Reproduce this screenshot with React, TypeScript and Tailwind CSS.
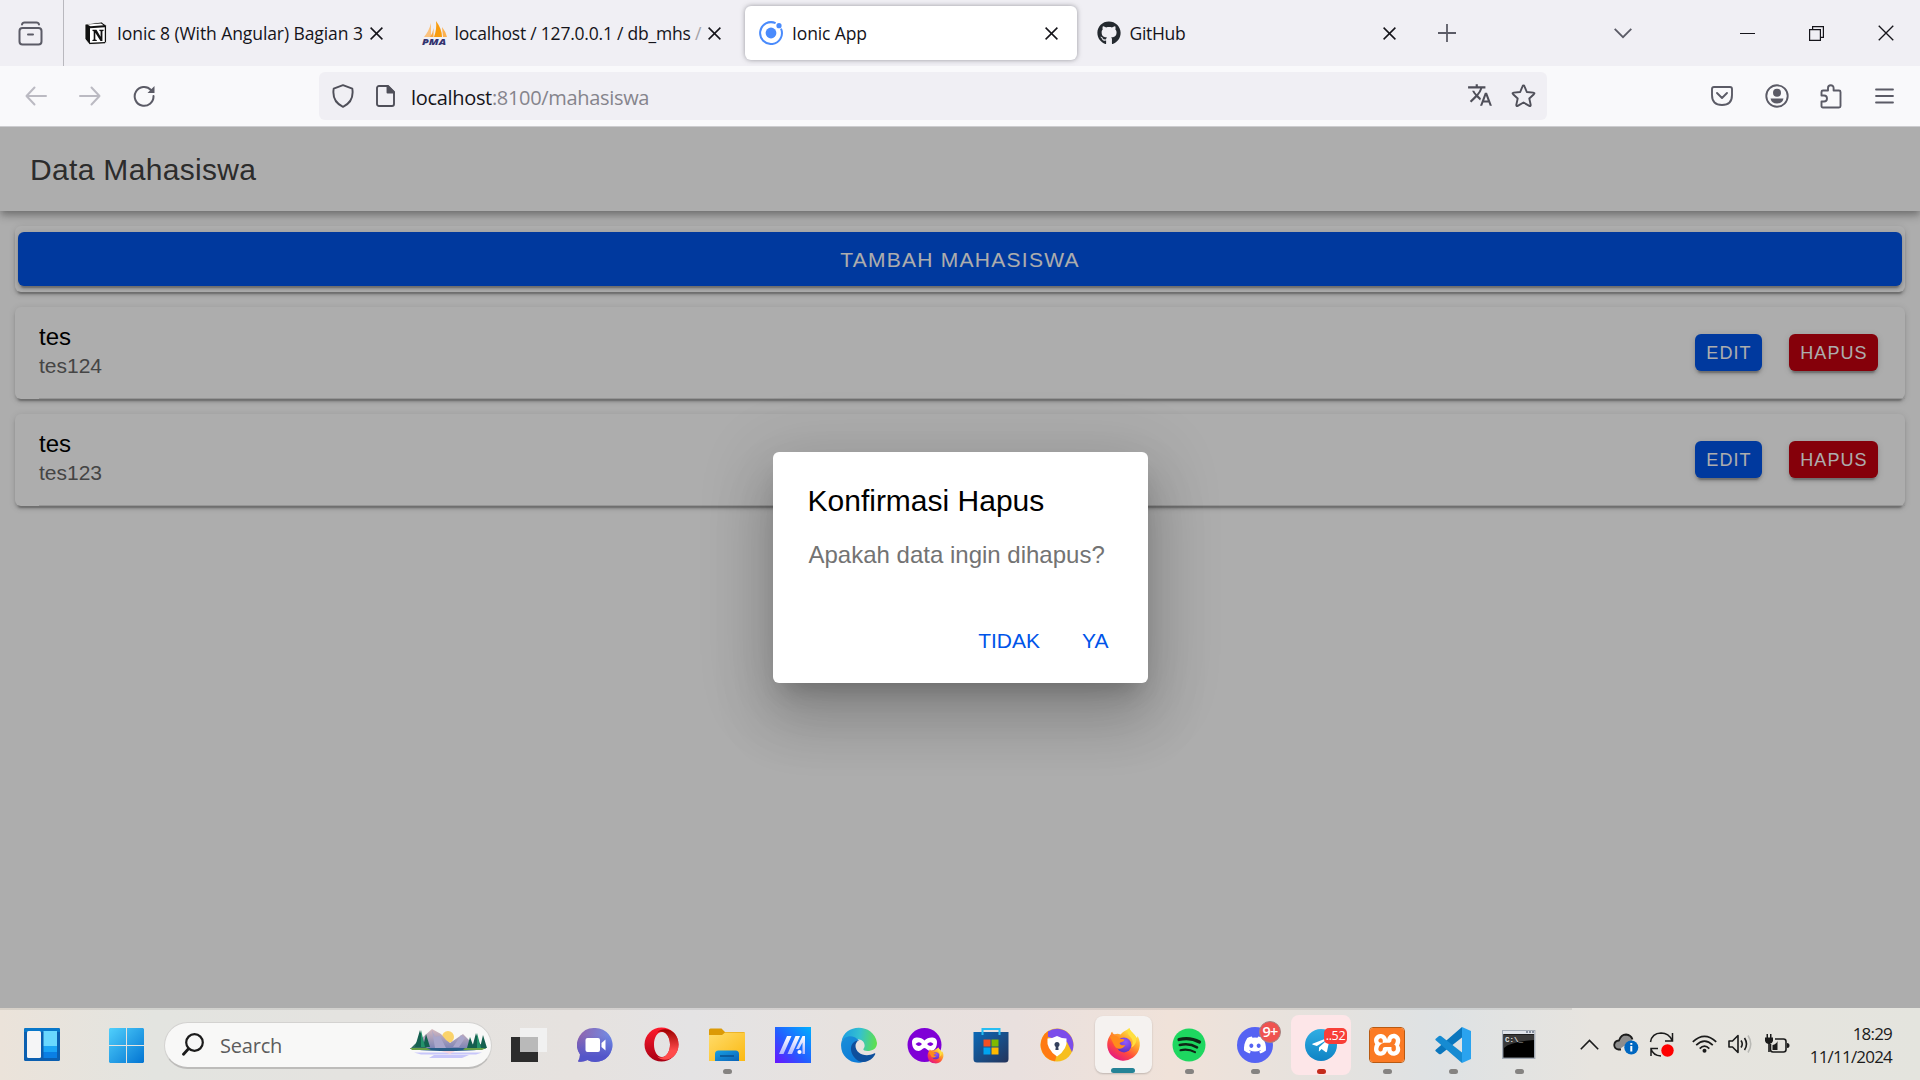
import type { ReactNode } from "react";
import { FaDiscord, FaGithub, FaTelegramPlane } from "react-icons/fa";
import { SiXampp } from "react-icons/si";
import { MdTranslate } from "react-icons/md";

function Cross({ size = 13, width = 1.5 }: { size?: number; width?: number }) {
  return (
    <svg width={size} height={size} viewBox="0 0 13 13" stroke="#15141a" strokeWidth={width} fill="none">
      <path d="M.6.6 12.4 12.4M12.4.6.6 12.4" />
    </svg>
  );
}

function Tab({ icon, active, children }: { icon: ReactNode; active?: boolean; children: ReactNode }) {
  return (
    <div
      className={
        active
          ? "flex h-[54px] w-[332px] items-center rounded-md bg-white pl-[14px] pr-5 shadow-[0_0_5px_rgba(80,80,90,0.55)]"
          : "flex h-[54px] w-[332px] items-center pl-[14px] pr-5"
      }
    >
      <div className="flex w-[33px] shrink-0 items-center">{icon}</div>
      <div className="w-[253px] shrink-0 whitespace-nowrap text-[17.5px] text-[#15141a]">{children}</div>
      <div className="flex w-[13px] shrink-0 justify-center">
        <Cross />
      </div>
    </div>
  );
}

function Slot({ children, w = "w-[54px]" }: { children: ReactNode; w?: string }) {
  return <div className={`flex shrink-0 items-center justify-center ${w}`}>{children}</div>;
}

const NotionIcon = () => (
  <svg width="24" height="24" viewBox="0 0 24 24">
    <path d="M1 3.2 17.5 1 22.5 4.500v16.500L20.500 22.800 5.500 23.600 1 18z" fill="#111" stroke="#fff" strokeWidth="0.8" />
    <path d="M3.200 3.600 17 2.400l2.600 1.900L6.500 5.200z" fill="#fff" />
    <path d="M6 7.200 20.800 6.300v14.600l-14.800.9z" fill="#fff" />
    <path d="M8.500 8.800h4l4.100 7V10.200l-1.300-.4V8.700h4.300v1.100l-1.200.5v9.600h-1.900l-5.200-8.200v6.800l1.500.5v1H8.400v-.9l1.300-.5V10.200l-1.200-.3z" fill="#111" />
  </svg>
);

const PmaIcon = () => (
  <svg width="26" height="25" viewBox="0 0 26 25" overflow="visible">
    <path d="M9 2v14H2Q7 10 9 2z" fill="#fbc27d" />
    <path d="M14 0Q20 8 20 16H12Q15 8 14 0z" fill="#f89c0e" />
    <path d="M11.500 7v9H8Q11 12 11.500 7z" fill="#f9a743" />
    <path d="M20 6Q24 11 25 16h-4z" fill="#fbb04f" />
    <text x="0" y="24" fontFamily="Open Sans, sans-serif" fontSize="9.500" fontWeight="800" fontStyle="italic" fill="#33336f" textLength="24" lengthAdjust="spacingAndGlyphs">
      PMA
    </text>
  </svg>
);

const IonicIcon = () => (
  <svg width="24" height="24" viewBox="0 0 24 24" fill="#4a8bfc">
    <circle cx="12" cy="12" r="5.4" />
    <circle cx="20" cy="4.700" r="2.600" />
    <path d="M16.600 2.200A10.900 10.900 0 1 0 22 7.700" fill="none" stroke="#4a8bfc" strokeWidth="2" />
  </svg>
);

function BrowserTabs() {
  return (
    <div className="flex h-[66px] items-center bg-[#f0eff4]">
      <div className="flex h-full w-16 shrink-0 items-center justify-center border-r border-[#b9b8be] pr-[3px]">
        <svg width="25" height="25" viewBox="0 0 25 25" fill="none" stroke="#5b5b66" strokeWidth="2" strokeLinecap="round">
          <path d="M4 3.500Q4.500 1.500 6.500 1.500h12Q20.500 1.500 21 3.500M10 13.500h5" />
          <rect x="1.500" y="7" width="22" height="16.500" rx="3" />
        </svg>
      </div>
      <div className="ml-[6px] flex shrink-0 gap-[5.5px]">
        <Tab icon={<NotionIcon />}>
          <span className="tracking-[-0.08px]">Ionic 8 (With Angular) Bagian 3</span>
        </Tab>
        <Tab icon={<PmaIcon />}>
          <span className="tracking-[-0.21px]">
            localhost / 127.0.0.1 / db_mhs <span className="text-[#a3a2a8]">/</span>
          </span>
        </Tab>
        <Tab active icon={<IonicIcon />}>
          <span className="tracking-[-0.12px]">Ionic App</span>
        </Tab>
        <Tab icon={<FaGithub size={24} color="#24292f" />}>
          <span className="tracking-[-0.3px]">GitHub</span>
        </Tab>
      </div>
      <div className="ml-[5px] flex">
        <Slot>
          <svg width="18" height="18" viewBox="0 0 18 18" stroke="#5b5b66" strokeWidth="1.800">
            <path d="M9 0v18M0 9h18" />
          </svg>
        </Slot>
      </div>
      <div className="ml-[122px] flex">
        <Slot>
          <svg width="18" height="11" viewBox="0 0 18 11" fill="none" stroke="#5b5b66" strokeWidth="1.800">
            <path d="m.7.8 8.300 8.400L17.300.8" />
          </svg>
        </Slot>
      </div>
      <div className="ml-auto flex">
        <Slot w="w-[69px]">
          <div className="h-px w-[15px] bg-[#15141a]" />
        </Slot>
        <Slot w="w-[69px]">
          <svg width="15" height="15" viewBox="0 0 15 15" fill="none" stroke="#15141a" strokeWidth="1.200">
            <path d="M.6 3.600h10.800v10.800H.6zM3.600 3.500V.6h10.800v10.800h-2.900" />
          </svg>
        </Slot>
        <Slot w="w-[69px]">
          <Cross size={16} width={1.1} />
        </Slot>
      </div>
    </div>
  );
}

function NavBar() {
  return (
    <div className="flex h-[61px] items-center border-b border-[#cccccf] bg-[#f9f9fb] pl-[9px] pr-[9px]">
      <Slot>
        <svg width="22" height="20" viewBox="0 0 22 20" fill="none" stroke="#bbbac2" strokeWidth="2" strokeLinecap="round" strokeLinejoin="round">
          <path d="M21 10H1.500M9.500 1.500 1.500 10l8 8.500" />
        </svg>
      </Slot>
      <Slot>
        <svg width="22" height="20" viewBox="0 0 22 20" fill="none" stroke="#bbbac2" strokeWidth="2" strokeLinecap="round" strokeLinejoin="round">
          <path d="M1 10h19.500M12.500 1.500l8 8.500-8 8.500" />
        </svg>
      </Slot>
      <Slot>
        <svg width="22" height="22" viewBox="0 0 22 22" fill="none" stroke="#5b5b66" strokeWidth="2" strokeLinecap="round">
          <path d="M18 5A9.400 9.400 0 1 0 20.500 11" />
          <path d="M21.500 1v7h-7z" fill="#5b5b66" stroke="none" />
        </svg>
      </Slot>
      <div className="ml-[148px] flex h-12 w-[1228px] shrink-0 items-center rounded-md bg-[#f0eff4] pl-[3px] pr-[3px]">
        <Slot w="w-[42px]">
          <svg width="22" height="24" viewBox="0 0 22 24" fill="none" stroke="#4f4f59" strokeWidth="1.900" strokeLinejoin="round">
            <path d="M11 1.200 20.300 4.600C21.800 14 17 20 11 22.800 5 20 .2 14 1.700 4.600z" />
          </svg>
        </Slot>
        <Slot w="w-[42px]">
          <svg width="19" height="22" viewBox="0 0 19 22" fill="none" stroke="#4f4f59" strokeWidth="1.900" strokeLinejoin="round">
            <path d="M3 1h9l6 6v12a2 2 0 0 1-2 2H3a2 2 0 0 1-2-2V3a2 2 0 0 1 2-2z" />
            <path d="M11.500 1v6.500H18z" fill="#4f4f59" />
          </svg>
        </Slot>
        <div className="ml-[5px] flex-1 whitespace-nowrap pt-[3px] text-[20px] tracking-[-0.32px] text-[#15141a]">
          localhost<span className="text-[#85848c]">:8100/mahasiswa</span>
        </div>
        <Slot w="w-[42px]">
          <MdTranslate size={26} color="#4f4f59" className="mr-[2px] mt-[-2px]" />
        </Slot>
        <Slot w="w-[42px]">
          <svg width="25" height="24" viewBox="0 0 25 24" fill="none" stroke="#4f4f59" strokeWidth="1.900" strokeLinejoin="round">
            <path d="M12.500 1.500q.7 0 1 .8l2.300 5.700 6.500.6q1.900.3.6 1.600l-4.600 4.300 1.400 6.400q.1 1.700-1.400 1l-5.800-3.400-5.800 3.400q-1.500.7-1.400-1l1.400-6.400L2.100 10.200Q.8 8.900 2.700 8.600L9.200 8l2.300-5.700q.3-.8 1-.8z" />
          </svg>
        </Slot>
      </div>
      <div className="ml-auto flex">
        <Slot>
          <svg width="22" height="20" viewBox="0 0 22 20" fill="none" stroke="#5b5b66" strokeWidth="1.900" strokeLinecap="round" strokeLinejoin="round">
            <path d="M3 1h16q2 0 2 2v6q0 10-10 10T1 9V3q0-2 2-2zM6 7l5 5 5-5" />
          </svg>
        </Slot>
        <Slot>
          <svg className="ml-px" width="24" height="24" viewBox="0 0 24 24" fill="#5b5b66">
            <circle cx="12" cy="12" r="10.700" fill="none" stroke="#5b5b66" strokeWidth="1.900" />
            <circle cx="12" cy="8.800" r="4" />
            <path d="M5.500 14.500h13q-1 5-6.500 5t-6.500-5z" />
          </svg>
        </Slot>
        <Slot>
          <svg className="ml-px" width="22" height="25" viewBox="0 0 22 25" fill="none" stroke="#5b5b66" strokeWidth="1.900" strokeLinejoin="round">
            <path d="M1.500 9V8Q1.500 6.500 3 6.500H8V4a2.800 2.800 0 0 1 5.600 0v2.500H19q1.500 0 1.500 1.500v14q0 1.500-1.500 1.500H3q-1.500 0-1.500-1.500v-4.500H4a3 3 0 0 0 0-6H1.500z" />
          </svg>
        </Slot>
        <Slot>
          <svg width="19" height="16" viewBox="0 0 19 16" stroke="#5b5b66" strokeWidth="1.800" strokeLinecap="round">
            <path d="M1 1.500h17M1 8h17M1 14.500h17" />
          </svg>
        </Slot>
      </div>
    </div>
  );
}

const cardShadow =
  "shadow-[0_4.5px_1.5px_-3px_rgba(0,0,0,0.2),0_3px_3px_0_rgba(0,0,0,0.14),0_1.5px_7.5px_0_rgba(0,0,0,0.12)]";

function StudentCard({ name, nim }: { name: string; nim: string }) {
  return (
    <div className={`flex h-[92px] items-stretch rounded-md bg-white pl-6 ${cardShadow}`}>
      <div className="flex flex-1 items-center border-b border-[#dcdcdc] pr-[27px]">
        <div className="flex-1 pb-[3px]">
          <div className="text-[24px] leading-[30px] text-black">{name}</div>
          <div className="text-[21px] leading-[28px] text-[#666]">{nim}</div>
        </div>
        <button className={`mr-[27px] h-[37px] w-[67px] rounded-md bg-[#0054e9] pl-px pt-px text-center text-[18px] tracking-[1.08px] text-white ${cardShadow}`}>
          EDIT
        </button>
        <button className={`h-[37px] w-[89px] rounded-md bg-[#c5000f] pl-px pt-px text-center text-[18px] tracking-[1.08px] text-white ${cardShadow}`}>
          HAPUS
        </button>
      </div>
    </div>
  );
}

function AppPage() {
  return (
    <main className='relative h-[881px] overflow-hidden bg-white font-["Liberation_Sans",sans-serif]'>
      <header className="relative flex h-[84px] items-center bg-white pl-[30px] text-[30px] tracking-[0.33px] text-[#424242] shadow-[0_3px_6px_-1.5px_rgba(0,0,0,0.2),0_6px_7.5px_0_rgba(0,0,0,0.14),0_1.5px_15px_0_rgba(0,0,0,0.12)]">
        Data Mahasiswa
      </header>
      <div className="flex flex-col gap-[15px] px-[15px] pt-[15px]">
        <div className={`rounded-md px-[3px] py-[6px] ${cardShadow}`}>
          <button className={`block h-[54px] w-full rounded-md bg-[#0054e9] pt-px text-[21px] tracking-[1.26px] text-white ${cardShadow}`}>
            TAMBAH MAHASISWA
          </button>
        </div>
        <StudentCard name="tes" nim="tes124" />
        <StudentCard name="tes" nim="tes123" />
      </div>
      <div className="absolute inset-0 flex items-center justify-center bg-black/32">
        <div className="h-[231px] w-[375px] rounded-md bg-white pl-[35px] pr-[18px] pt-[30px] shadow-[0_16.5px_22.5px_-10.5px_rgba(0,0,0,0.2),0_36px_57px_4.5px_rgba(0,0,0,0.14),0_13.5px_69px_12px_rgba(0,0,0,0.12)]">
          <h2 className="text-[30px] leading-[38px] text-black">Konfirmasi Hapus</h2>
          <p className="ml-px mt-4 text-[24px] leading-[38px] text-[#737373]">Apakah data ingin dihapus?</p>
          <div className="mt-10 flex justify-end text-[21px] leading-[54px] text-[#0054e9]">
            <span className="mr-[42px]">TIDAK</span>
            <span className="mr-[21px]">YA</span>
          </div>
        </div>
      </div>
    </main>
  );
}

const FirefoxArt = ({ size }: { size: number }) => (
  <svg width={size} height={size} viewBox="0 0 36 36">
    <defs>
      <linearGradient id="fxBody" x1="0.85" y1="0.1" x2="0.25" y2="1">
        <stop offset="0" stopColor="#fff44f" />
        <stop offset="0.35" stopColor="#ffa02a" />
        <stop offset="0.65" stopColor="#ff4a3d" />
        <stop offset="1" stopColor="#e2128b" />
      </linearGradient>
      <radialGradient id="fxGlobe" cx="0.6" cy="0.3" r="0.8">
        <stop offset="0" stopColor="#9059ff" />
        <stop offset="1" stopColor="#5b2bb5" />
      </radialGradient>
    </defs>
    <path d="M24 1c1 4 5 6 7.500 10 .8-.2 1-1 1-2 2.500 5 3 9 1.500 14A16.800 16.800 0 0 1 1.500 21C.7 15 2.500 11 5 7.500 5 6 5.500 5.500 6.500 5c.2 1.500 1 2.500 2.500 2.500 2-1 4-.8 6 .1C17 5 20 4 24 1z" fill="url(#fxBody)" />
    <circle cx="18.500" cy="18.500" r="7.600" fill="url(#fxGlobe)" />
    <path d="M4 10c4-2 8-1 10 2 2 .3 4 .2 5 1-.5 2-3 2.200-5 3.500.3 2 3 3 6 2-2 4-7 5-10 2.500C8 19 7 15 4 10z" fill="#ff8b1c" />
    <path d="M24 1c-3 4-1 7 1 9 3 3 3 7 1 11 4-2 6-6 5-10C30 7 25 5 24 1z" fill="#ffdf3e" />
  </svg>
);

const ChatIcon = () => (
  <svg width="36" height="36" viewBox="0 0 36 36">
    <defs>
      <linearGradient id="chatBg" x1="0" y1="0.2" x2="1" y2="0.3">
        <stop offset="0" stopColor="#9162ab" />
        <stop offset="1" stopColor="#6f8ee8" />
      </linearGradient>
      <linearGradient id="chatShade" x1="0" y1="0" x2="0" y2="1">
        <stop offset="0.2" stopColor="#5558c8" stopOpacity="0" />
        <stop offset="0.85" stopColor="#5355c9" />
      </linearGradient>
    </defs>
    <path d="M18.500 1a17 17 0 1 1-8 32Q6 35.500 1 34.500q2-3 2-7A17 17 0 0 1 18.500 1z" fill="url(#chatBg)" />
    <path d="M18.500 1a17 17 0 1 1-8 32Q6 35.500 1 34.500q2-3 2-7A17 17 0 0 1 18.500 1z" fill="url(#chatShade)" />
    <rect x="8.500" y="11" width="14.500" height="14" rx="2" fill="#fff" />
    <path d="m24.500 16 4-3.500v11l-4-3.500z" fill="#fff" />
  </svg>
);

const OperaIcon = () => (
  <svg width="35" height="35" viewBox="0 0 35 35">
    <defs>
      <linearGradient id="opL" x1="0" y1="0" x2="0" y2="1">
        <stop offset="0" stopColor="#ff1b2d" />
        <stop offset="1" stopColor="#a70014" />
      </linearGradient>
      <linearGradient id="opR" x1="0" y1="0" x2="0" y2="1">
        <stop offset="0" stopColor="#9c0000" />
        <stop offset="0.7" stopColor="#ff4b4b" />
      </linearGradient>
    </defs>
    <path fillRule="evenodd" d="M17.500.5a17 17 0 1 1 0 34 17 17 0 0 1 0-34zM18 5c-5 0-8 6-8 12.500S13 30 18 30s8-6 8-12.500S23 5 18 5z" fill="url(#opL)" />
    <path d="M13 5.500C20-1.500 34.500 3 34.500 17.500S20 36.500 13 29.500q3.500 1.800 7 .3c3.500-2 6-6.500 6-12.300S23.500 7.200 20 5.200q-3.500-1.500-7 .3z" fill="url(#opR)" />
  </svg>
);

const FolderIcon = () => (
  <svg width="36" height="34" viewBox="0 0 36 34">
    <defs>
      <linearGradient id="fold" x1="0" y1="0" x2="1" y2="1">
        <stop offset="0" stopColor="#ffdc6b" />
        <stop offset="1" stopColor="#fbb912" />
      </linearGradient>
      <linearGradient id="foldBlue" x1="0" y1="0" x2="1" y2="1">
        <stop offset="0" stopColor="#17a0e3" />
        <stop offset="1" stopColor="#0c63b8" />
      </linearGradient>
    </defs>
    <path d="M0 2q0-1.500 1.500-1.500h11L16 4h18.500Q36 4 36 5.500V12H0z" fill="#dc9a06" />
    <path d="M0 7h13l3-2.500h20V33H0z" fill="url(#fold)" />
    <path d="M6 33v-7q0-3.500 3.500-3.500h17Q30 22.500 30 26v7z" fill="url(#foldBlue)" />
    <path d="M11 28h14" stroke="#084f8e" strokeWidth="1.500" />
  </svg>
);

const MyAsusIcon = () => (
  <svg width="36" height="36" viewBox="0 0 36 36">
    <defs>
      <linearGradient id="asus" x1="0" y1="1" x2="1" y2="0">
        <stop offset="0" stopColor="#6a14ff" />
        <stop offset="0.45" stopColor="#245cff" />
        <stop offset="1" stopColor="#00b0ff" />
      </linearGradient>
      <linearGradient id="asusM" x1="0" y1="0" x2="0" y2="1">
        <stop offset="0" stopColor="#fff" />
        <stop offset="1" stopColor="#b0b8ff" />
      </linearGradient>
    </defs>
    <path d="M0 0h36v36H0z" fill="url(#asus)" />
    <path d="M12 9h4.500L8.500 27H4zM20.500 9H25l-8 18h-4.500z" fill="url(#asusM)" />
    <path d="M27.500 9H30v18h-2.500V15.500L24 22h-3z" fill="url(#asusM)" />
    <circle cx="24.500" cy="25" r="2.100" fill="#fff" />
  </svg>
);

const EdgeIcon = () => (
  <svg width="36" height="36" viewBox="0 0 36 36">
    <defs>
      <linearGradient id="edA" x1="0" y1="0.4" x2="1" y2="0.5">
        <stop offset="0" stopColor="#1b9de2" />
        <stop offset="0.5" stopColor="#35c1cf" />
        <stop offset="1" stopColor="#5fe04b" />
      </linearGradient>
      <linearGradient id="edB" x1="0" y1="0" x2="0.6" y2="1">
        <stop offset="0" stopColor="#1a8fd8" />
        <stop offset="1" stopColor="#0c7bd8" />
      </linearGradient>
    </defs>
    <path d="M.5 15C3-4 33-4 36 16c0 6-5 8-9.500 8-4 0-5-1.500-3.500-3 1.500-2 .5-8-5-8.500C10 9 3 10 .5 15z" fill="url(#edA)" />
    <path d="M.3 15.500C3 8.500 12 7 18 13.500c-5 0-7 6-5 11 2 5 7 8 12 9.500C12 40-2 30 .3 15.500z" fill="url(#edB)" />
    <path d="M17.500 13.500C9 14 8 24 13 30c4 6 13 7 19 .5 2.500-3 3-5 1-4C24 31 14.500 26 14.500 19q0-3.500 3-5.500z" fill="#0e4f9c" />
  </svg>
);

const PrivateIcon = () => (
  <span className="relative">
    <svg width="36" height="36" viewBox="0 0 36 36">
      <circle cx="17.500" cy="18" r="17" fill="#7f00d6" />
      <path fillRule="evenodd" d="M17.500 13.500C21 9.500 30 9 30 15c0 6-3 9-6.500 9-3 0-4-3-6-3s-3 3-6 3C8 24 5 21 5 15c0-6 9-5.500 12.500-1.500zM8.500 17q3.500 4 6.500 0-3-3.500-6.500 0zm11.500 0q3.500 4 6.500 0-3-3.500-6.500 0z" fill="#fff" />
    </svg>
    <span className="absolute -bottom-px -right-px">
      <FirefoxArt size={17} />
    </span>
  </span>
);

const StoreIcon = () => (
  <svg width="36" height="36" viewBox="0 0 36 36">
    <defs>
      <linearGradient id="store" x1="0" y1="0" x2="1" y2="1">
        <stop offset="0" stopColor="#0b69b7" />
        <stop offset="1" stopColor="#25345b" />
      </linearGradient>
    </defs>
    <path d="M.5 5h35v27q0 3.500-3.500 3.500H4Q.5 35.500.5 32z" fill="url(#store)" />
    <path d="M9.500 8V2h17v6" fill="none" stroke="#27bdf2" strokeWidth="2" />
    <path d="M10.500 12.500h7v7h-7z" fill="#f25022" />
    <path d="M18.500 12.500h7v7h-7z" fill="#7fba00" />
    <path d="M10.500 20.500h7v7h-7z" fill="#00a4ef" />
    <path d="M18.500 20.500h7v7h-7z" fill="#ffb900" />
  </svg>
);

const SecureIcon = () => (
  <svg width="34" height="34" viewBox="0 0 34 34">
    <circle cx="17" cy="17" r="16.500" fill="#f6bf1f" />
    <path d="M9 2.600A16.500 16.500 0 0 0 15 33.300L17 26 7.500 14z" fill="#ff7a12" />
    <path d="M8 3.400A16.500 16.500 0 0 1 32 24l-5-10L8 9z" fill="#7b4dea" />
    <path d="M17 8q5 2.500 9.500 2.500Q28 21 17 28.500 6 21 7.500 10.500 12 10.500 17 8z" fill="#fff" />
    <circle cx="17" cy="16.500" r="2.500" fill="#34405c" />
    <path d="M16 17h2l.6 5h-3.200z" fill="#34405c" />
  </svg>
);

const SpotifyIcon = () => (
  <svg width="34" height="34" viewBox="0 0 34 34">
    <circle cx="17" cy="17" r="16.500" fill="#1ed760" />
    <g fill="none" stroke="#0e2616" strokeLinecap="round">
      <path d="M7 11.500q11-2.800 20.500 2.500" strokeWidth="3.200" />
      <path d="M7.800 17q9.500-2.300 17.200 2.300" strokeWidth="2.600" />
      <path d="M8.500 22.200q8-1.700 14.500 2" strokeWidth="2.100" />
    </g>
  </svg>
);

const CodeIcon = () => (
  <svg width="36" height="36" viewBox="0 0 36 36">
    <path d="M1 24.500 4 27q1 .7 2 0L27 10.500V0L.7 22.800q-.9.900.3 1.700z" fill="#0a76bd" />
    <path d="M1 11.500 4 9q1-.7 2 0l21 16.500V36L.7 13.200q-.9-.9.3-1.700z" fill="#168bd2" />
    <path d="M27 0 36 4v28l-9 4z" fill="#2aa3ef" />
  </svg>
);

const CmdIcon = () => (
  <svg width="34" height="30" viewBox="0 0 34 30">
    <rect x="0.700" y="0.700" width="32" height="27.600" fill="#000" stroke="#a3abb5" strokeWidth="1.400" />
    <path d="M1 1h31.500v3H1z" fill="#dfe3e9" />
    <path d="M24 2h2m1 0h2m1 0h2" stroke="#6b7688" strokeWidth="1.300" />
    <path d="M2 4.500h30V10Q8 12 2 18z" fill="#3a3a3a" />
    <text x="3" y="11.500" fontSize="7.500" fontFamily="Liberation Mono" fontWeight="bold" fill="#e5e5e5">
      C:\_
    </text>
  </svg>
);

function TaskItem({ children, dot, box = "h-[60px] w-[60px]" }: { children: ReactNode; dot?: string; box?: string }) {
  return (
    <div className="flex h-[72px] w-[66px] items-center justify-center pt-px">
      <div className={`relative flex items-center justify-center rounded-lg ${box}`}>
        {children}
        {dot && <span className={`absolute bottom-[1px] rounded-full ${dot}`} />}
      </div>
    </div>
  );
}

const greyDot = "h-[5px] w-[9px] bg-[#858381]";

const Lake = () => (
  <svg width="78" height="32" viewBox="0 0 78 32">
    <defs>
      <linearGradient id="mtn" x1="0" y1="0" x2="0" y2="1">
        <stop offset="0" stopColor="#d6b9bf" />
        <stop offset="1" stopColor="#7580b5" />
      </linearGradient>
    </defs>
    <circle cx="39" cy="8" r="6" fill="#fbd36a" />
    <path d="M5 20 14 8l9-8 9 5 5 6 4 3 13-9 5 5 10 11z" fill="url(#mtn)" />
    <path d="m23 1 3 7 5-1 6 12H26zM52 6l-8 12h6l6-9z" fill="#a9a6cb" />
    <path d="M1 20 8 13l12 7zM60 20l9-7 8 7z" fill="#2e6c61" />
    <path d="M1 19h76q-5 3-38 3T1 19z" fill="#285e87" />
    <path d="M1 19h17l4 2H3zM56 19h21l-4 2H54z" fill="#68a045" />
    <path d="m11 1 5 17H6zM17 5l4 13h-7zM61 8l4 11h-7zM67 4l5 15h-9zM74 6l4 13h-7z" fill="#14604f" />
    <path d="M12 1v17h4zM68 4v15h4z" fill="#23926a" />
    <path d="M5 23.500h68l-6 2H12zM25 26h35l-7 3H20z" fill="#c7c6fa" />
    <path d="M32 22h14l-5 3z" fill="#f6d4de" />
  </svg>
);

function Taskbar() {
  return (
    <footer className="relative flex h-[72px] items-center bg-[linear-gradient(90deg,#ebe3da_0%,#e3e4e0_8%,#e4e3e0_18%,#e6e2df_30%,#e4e3e4_36%,#e7e2df_44%,#e9e0de_53%,#f0e2d9_61%,#e5e2de_69%,#dee2e4_75%,#e7e4df_83%,#e4e4de_100%)]">
      <div className="absolute left-0 top-0 h-[2px] w-[1572px] bg-black/8" />
      <div className="ml-6 w-[85px] pt-px">
        <svg width="36" height="33" viewBox="0 0 36 33">
          <rect width="36" height="33" rx="1.500" fill="#0b5fb0" />
          <path d="M0 1.500Q0 0 1.500 0h33Q36 0 36 1.500V4H0z" fill="#0877c9" />
          <rect x="3" y="3" width="14" height="27" rx="1.500" fill="#f5f5f6" />
          <path d="M19.500 3H33v15H19.500z" fill="#69d8ff" />
          <path d="M19.500 18H33v6H19.500z" fill="#1aa4f5" />
          <path d="M19.500 24H33v6H19.500z" fill="#0a7fe4" />
        </svg>
      </div>
      <div className="w-[55px] pt-[3px]">
        <svg width="35" height="35" viewBox="0 0 35 35">
          <defs>
            <linearGradient id="win" x1="0" y1="0" x2="1" y2="1">
              <stop offset="0" stopColor="#50d0fc" />
              <stop offset="1" stopColor="#0274d2" />
            </linearGradient>
          </defs>
          <path d="M1 0h16v17H0V1zM18 0h16l1 1v16H18zM0 18h17v17H1l-1-1zM18 18h17v16l-1 1H18z" fill="url(#win)" />
        </svg>
      </div>
      <div className="mt-[2px] flex h-[47px] w-[328px] items-center rounded-full border border-b-2 border-[#d3d2d0] border-b-[#bdbcba] bg-[#f8f8f7] pl-[17px] pr-1">
        <svg width="22" height="23" viewBox="0 0 22 23" fill="none" stroke="#1b1b1b" strokeWidth="2.200" strokeLinecap="round">
          <circle cx="12.500" cy="9.500" r="8.300" />
          <path d="m6.500 15.800-5 5.500" strokeWidth="2.800" />
        </svg>
        <span className="ml-4 flex-1 pt-[2px] text-[20px] tracking-[-0.2px] text-[#5c5c5c]">Search</span>
        <Lake />
      </div>
      <div className="ml-1 flex shrink-0">
        <TaskItem>
          <svg width="36" height="34" viewBox="0 0 36 34">
            <path d="M0 9h27v25H0z" fill="#2c2c2c" />
            <path d="M9 0h27v24H9z" fill="#f1f1f1" />
            <path d="M9 9h18v15H9z" fill="#b9b9b9" />
          </svg>
        </TaskItem>
        <TaskItem>
          <ChatIcon />
        </TaskItem>
        <TaskItem>
          <OperaIcon />
        </TaskItem>
        <TaskItem dot={greyDot}>
          <FolderIcon />
        </TaskItem>
        <TaskItem>
          <MyAsusIcon />
        </TaskItem>
        <TaskItem>
          <EdgeIcon />
        </TaskItem>
        <TaskItem>
          <PrivateIcon />
        </TaskItem>
        <TaskItem>
          <StoreIcon />
        </TaskItem>
        <TaskItem>
          <SecureIcon />
        </TaskItem>
        <TaskItem box="h-[57px] w-[57px] bg-[#f5f2f0] shadow-[0_1px_2px_rgba(0,0,0,0.2)]" dot="-mb-px h-[5px] w-6 bg-[#258396]">
          <FirefoxArt size={35} />
        </TaskItem>
        <TaskItem dot={greyDot}>
          <SpotifyIcon />
        </TaskItem>
        <TaskItem dot={greyDot}>
          <span className="flex h-9 w-9 items-center justify-center rounded-full bg-[#5563f3]">
            <FaDiscord size={24} color="#fff" />
          </span>
          <span className="absolute right-[4px] top-[6px] flex h-[22px] w-[22px] items-center justify-center rounded-full border border-[#a58482] bg-[#ef5350] text-[14.5px] font-semibold tracking-tighter text-white">
            9+
          </span>
        </TaskItem>
        <TaskItem box="h-[60px] w-[60px] bg-[#fde6e8]" dot="h-[5px] w-[9px] bg-[#c42b1c]">
          <span className="flex h-8 w-8 items-center justify-center rounded-full bg-[linear-gradient(#31aee3,#0f83c4)]">
            <FaTelegramPlane size={20} color="#fff" />
          </span>
          <span className="absolute right-[4px] top-[13px] flex h-4 w-[23px] items-center justify-center rounded-[5px] bg-[#f83f38] text-[12.5px] leading-4 tracking-[-0.3px] text-white">
            ..52
          </span>
        </TaskItem>
        <TaskItem dot={greyDot}>
          <span className="flex h-9 w-9 items-center justify-center overflow-hidden rounded-sm border border-[#b85a12] bg-white">
            <SiXampp size={36} color="#fb7a24" className="shrink-0" />
          </span>
        </TaskItem>
        <TaskItem dot={greyDot}>
          <CodeIcon />
        </TaskItem>
        <TaskItem dot={greyDot}>
          <CmdIcon />
        </TaskItem>
      </div>
      <div className="ml-auto flex items-center pr-[28px]">
        <svg width="19" height="11" viewBox="0 0 19 11" fill="none" stroke="#1b1b1b" strokeWidth="1.600">
          <path d="m.8 10.200 8.700-8.700 8.700 8.700" />
        </svg>
        <svg className="ml-[14px]" width="26" height="22" viewBox="0 0 26 22">
          <path d="M6 16.500Q1 16 1.200 11.500 2 7.500 6 7.500 8 1.500 13 2q4.500.5 6 5.500" fill="#8d8d8d" />
          <path d="M8 16.500H5.500Q1.500 16 1.200 12 1.500 7.800 6 7.500 8 1.500 13 1.500q5 .5 6.500 5" fill="none" stroke="#1b1b1b" strokeWidth="1.800" />
          <circle cx="18.300" cy="14.500" r="7" fill="#0067c0" />
          <path d="M18.300 13v5.500M18.300 10v1.800" stroke="#fff" strokeWidth="2" />
        </svg>
        <svg className="ml-[10px]" width="26" height="25" viewBox="0 0 26 25" fill="none" stroke="#1b1b1b" strokeWidth="1.500">
          <path d="M1.500 10Q3 1.200 12 1q8 0 11 7.500M23.500 1v8h-7.500M12 24Q4 23.500 2 17M2 24v-7.500h7" />
          <circle cx="18.500" cy="18.500" r="6.200" fill="#fe0000" stroke="none" />
        </svg>
        <svg className="ml-[17px]" width="25" height="18" viewBox="0 0 25 18" fill="none" stroke="#1b1b1b" strokeWidth="1.700">
          <path d="M.8 6.800q11.700-11 23.400 0M4.200 10.200q8.300-8 16.600 0M7.700 13.600q4.800-5 9.600 0" />
          <circle cx="12.500" cy="15.800" r="2" fill="#1b1b1b" stroke="none" />
        </svg>
        <svg className="ml-[11px]" width="25" height="20" viewBox="0 0 25 20" fill="none" stroke="#1b1b1b" strokeWidth="1.600" strokeLinejoin="round">
          <path d="M1 7h3.500L10 1.500v17L4.500 13H1zM13 6.500q2.500 3.500 0 7M16.500 4q4 6 0 12" />
          <path d="M20 1.500q5.500 8.500 0 17" stroke="#b9b9b5" />
        </svg>
        <svg className="ml-3" width="25" height="20" viewBox="0 0 25 20">
          <path d="M10 5h8.500Q21 5 21 7.500v8q0 2.500-2.500 2.500H8q-2.500 0-2.500-2.500V10" fill="none" stroke="#1b1b1b" strokeWidth="1.600" />
          <path d="M22 9q2.500 0 2.500 2.500T22 14zM7.500 11q4-1 5-4v9h-5zM0 3.500h1.500V0H3v3.500h2V0h1.500v3.500H8V7q-1 3-3.200 3v8H3.200v-8Q.5 9.500 0 7z" fill="#1b1b1b" />
        </svg>
        <div className="ml-[6px] w-[96px] whitespace-nowrap pt-px text-right text-[17px] leading-[23px] tracking-[-0.8px] text-[#1b1b1b]">
          <div>18:29</div>
          <div>11/11/2024</div>
        </div>
      </div>
    </footer>
  );
}

export default function App() {
  return (
    <div className='h-[1080px] w-[1920px] overflow-hidden font-["Open_Sans","Noto_Sans",sans-serif]'>
      <BrowserTabs />
      <NavBar />
      <AppPage />
      <Taskbar />
    </div>
  );
}
